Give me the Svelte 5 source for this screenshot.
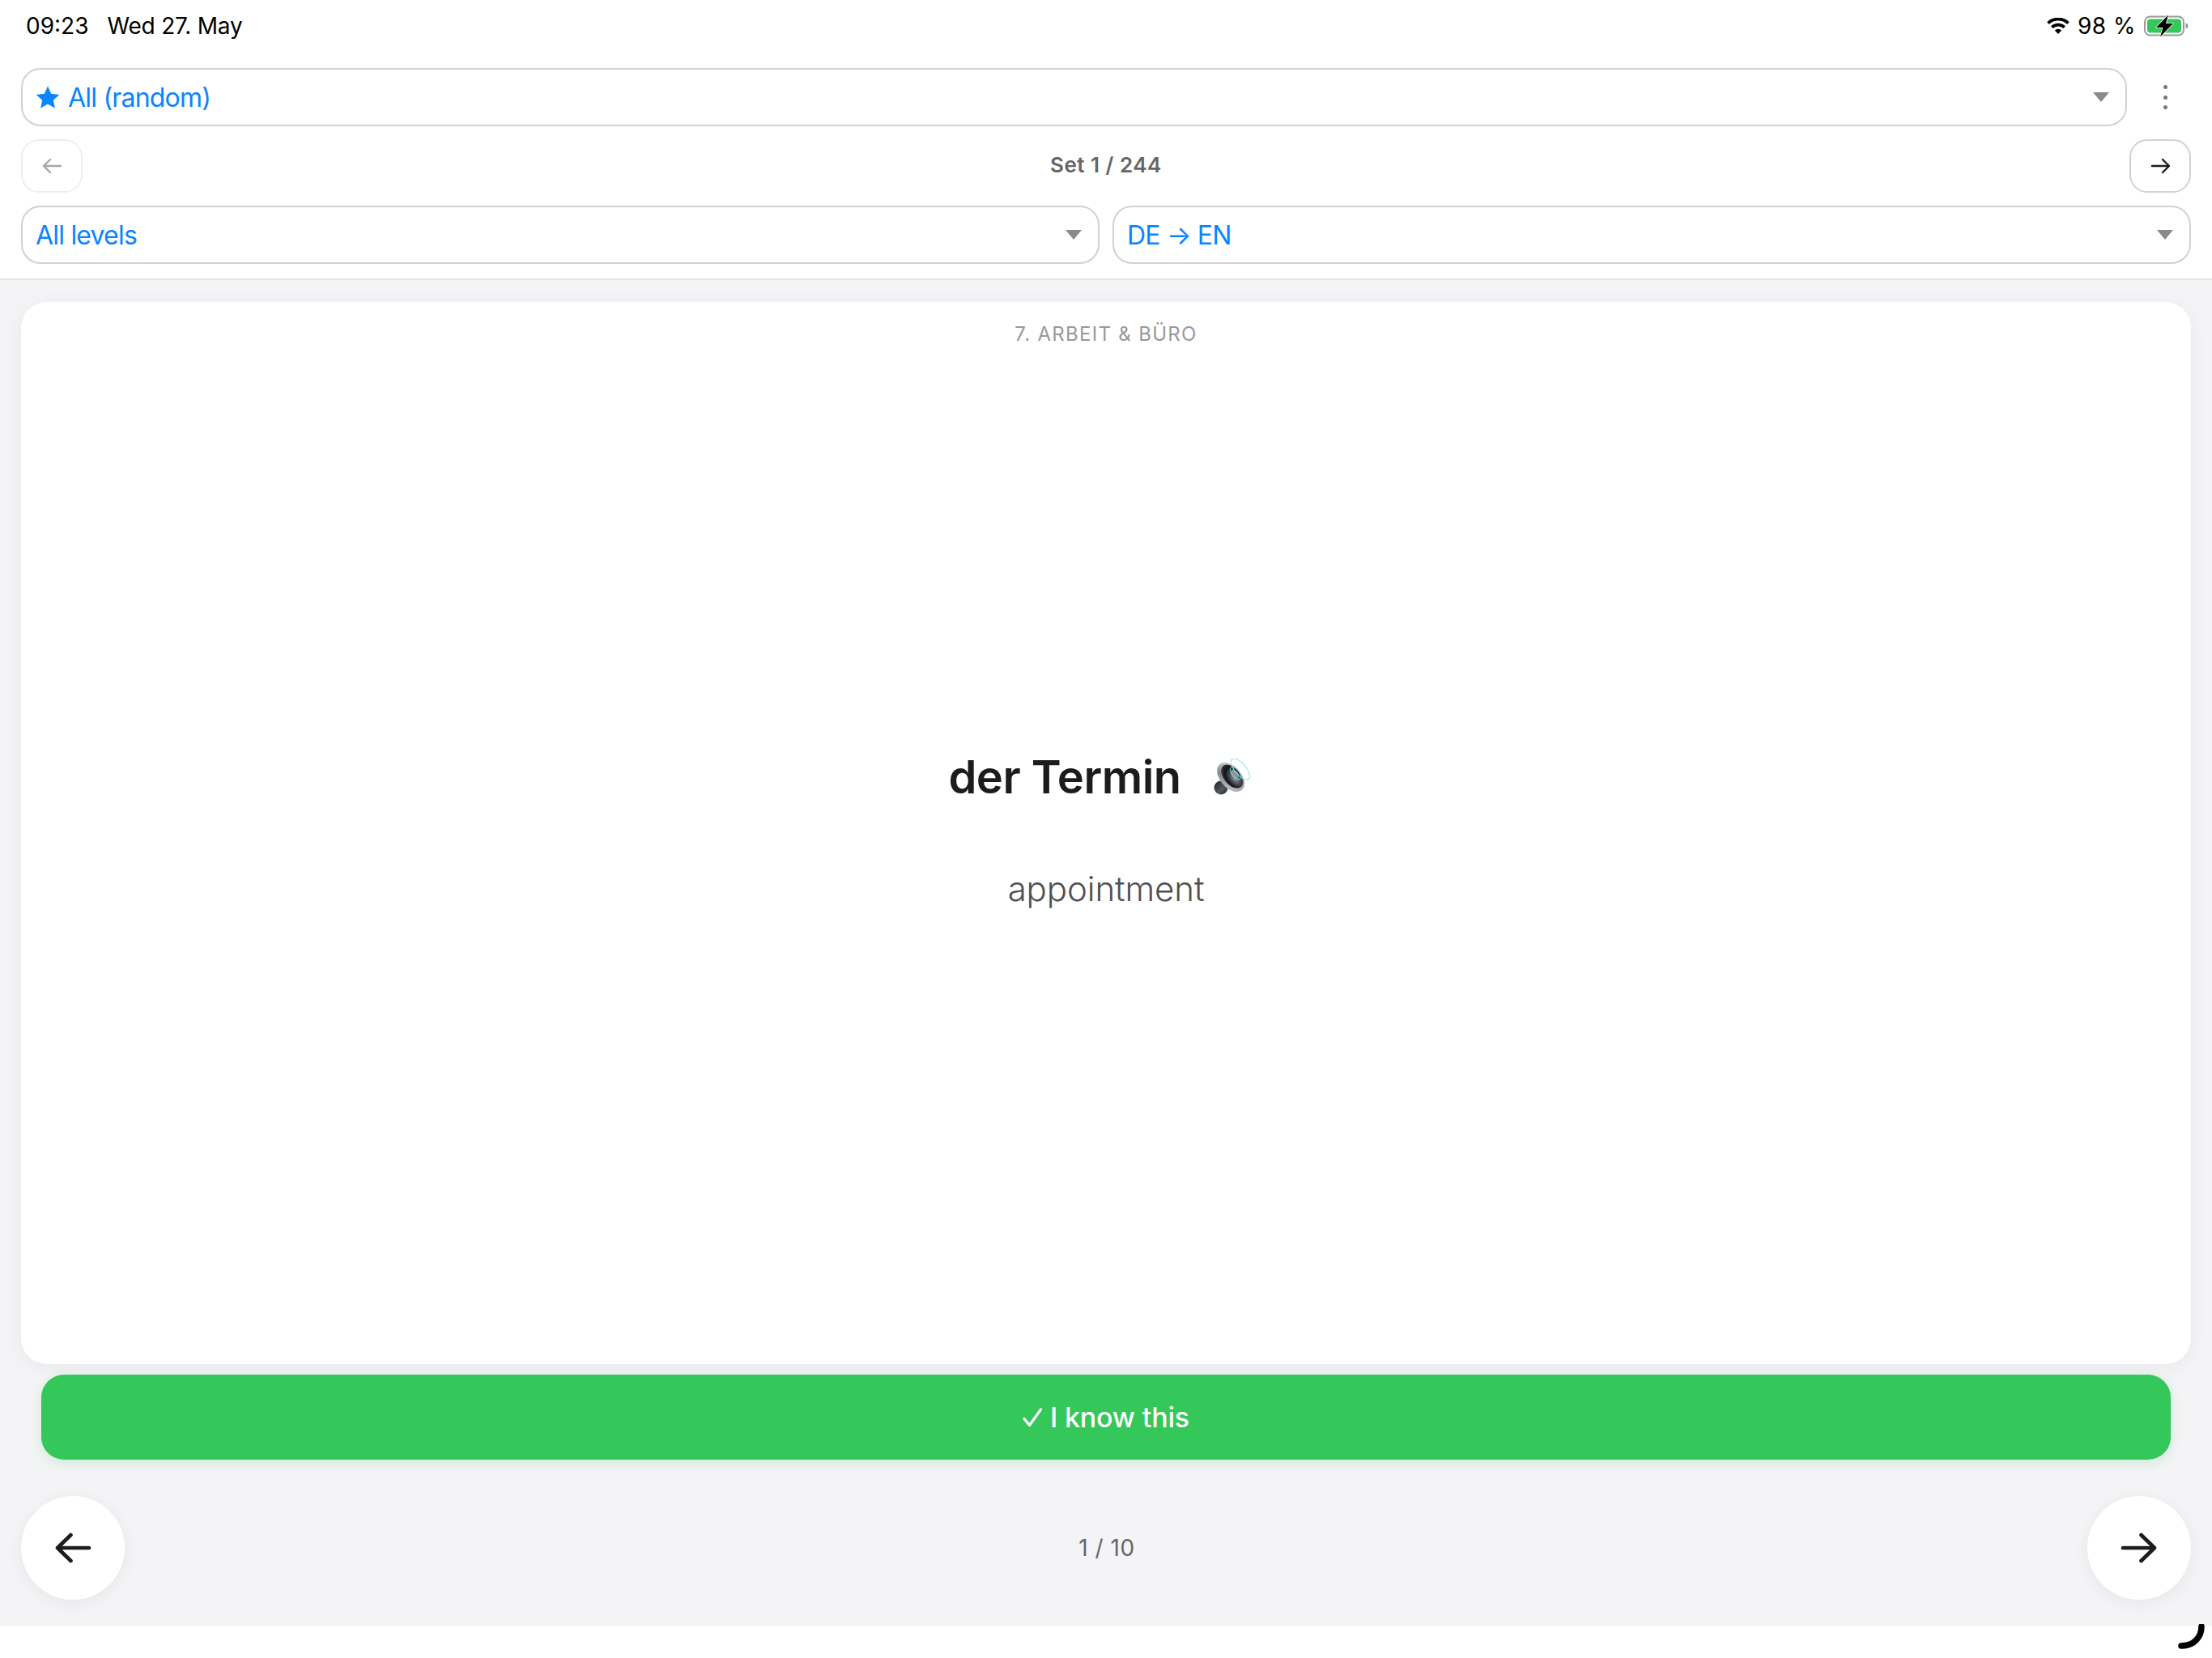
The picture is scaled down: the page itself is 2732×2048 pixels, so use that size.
<script>
  let deck = 'All (random)';
  let level = 'All levels';
  let direction = 'DE → EN';
  let setLabel = 'Set 1 / 244';
  let category = '7. Arbeit & Büro';
  let word = 'der Termin';
  let translation = 'appointment';
  let progress = '1 / 10';
</script>

<div class="page">
  <div class="status-bar">
    <div class="status-left">
      <span>09:23</span>
      <span>Wed 27. May</span>
    </div>
    <div class="status-right">
      <svg class="wifi" viewBox="0 0 28 20" width="28" height="20">
        <path d="M14 20l-4.2-4.6a6.2 6.2 0 0 1 8.4 0z" fill="#000" />
        <path d="M7.6 13.1L5 10.3a13 13 0 0 1 18 0l-2.6 2.8a9.2 9.2 0 0 0-12.8 0z" fill="#000" />
        <path d="M2.9 8L0.2 5.2a20 20 0 0 1 27.6 0L25.1 8a16.2 16.2 0 0 0-22.2 0z" fill="#000" />
      </svg>
      <span class="battery-text">98 %</span>
      <svg class="battery" viewBox="0 0 56 28" width="56" height="28">
        <rect x="1" y="2.5" width="48" height="23" rx="6.5" fill="none" stroke="#9a9a9a" stroke-width="2" />
        <rect x="4" y="5.5" width="42" height="17" rx="4" fill="#34c759" />
        <path d="M51.5 10.5c2 .5 3 2 3 3.5s-1 3-3 3.5z" fill="#9a9a9a" />
        <path d="M30 0.5L15 16h8.5L20 27.5 36 11h-9z" fill="#000" stroke="#fff" stroke-width="1.6" stroke-linejoin="round" paint-order="stroke" />
      </svg>
    </div>
  </div>

  <header>
    <div class="deck-row">
      <div class="select deck">
        <span class="select-value">
          <svg class="star" viewBox="0 0 30 28" width="30" height="28">
            <path d="M15 .6l4.2 9.2 10.1 1.1-7.5 6.8 2.1 9.9L15 22.6l-8.9 5 2.1-9.9L.7 10.9l10.1-1.1z" fill="#0a84ff" />
          </svg>
          {deck}
        </span>
        <span class="caret"></span>
      </div>
      <button class="more" aria-label="More">
        <span></span><span></span><span></span>
      </button>
    </div>

    <div class="set-row">
      <button class="set-btn disabled" aria-label="Previous set">
        <svg viewBox="0 0 24 20" width="24" height="20">
          <path d="M23 10H2M10 2l-8 8 8 8" fill="none" stroke="#a6a6a6" stroke-width="2.4" stroke-linecap="round" stroke-linejoin="round" />
        </svg>
      </button>
      <span class="set-label">{setLabel}</span>
      <button class="set-btn" aria-label="Next set">
        <svg viewBox="0 0 24 20" width="24" height="20">
          <path d="M2 10h21M15 2l8 8-8 8" fill="none" stroke="#1c1c1e" stroke-width="2.4" stroke-linecap="round" stroke-linejoin="round" />
        </svg>
      </button>
    </div>

    <div class="filter-row">
      <div class="select">
        <span class="select-value">{level}</span>
        <span class="caret"></span>
      </div>
      <div class="select">
        <span class="select-value">{direction}</span>
        <span class="caret"></span>
      </div>
    </div>
  </header>

  <main>
    <section class="card">
      <div class="category">{category}</div>
      <div class="card-body">
        <div class="word-row">
          <span class="word">{word}</span>
          <button class="speak" aria-label="Play audio">
            <svg viewBox="0 0 46 46" width="46" height="46">
              <defs>
                <linearGradient id="rim" x1="0" y1="0" x2="1" y2="1">
                  <stop offset="0" stop-color="#dfe1e4" />
                  <stop offset="0.5" stop-color="#83878b" />
                  <stop offset="1" stop-color="#d2d5d8" />
                </linearGradient>
                <radialGradient id="cone" cx="0.62" cy="0.42" r="0.62">
                  <stop offset="0" stop-color="#a2a8ae" />
                  <stop offset="0.35" stop-color="#565a5f" />
                  <stop offset="0.75" stop-color="#121315" />
                  <stop offset="1" stop-color="#33363a" />
                </radialGradient>
                <linearGradient id="magnet" x1="0" y1="0" x2="1" y2="1">
                  <stop offset="0" stop-color="#1f2124" />
                  <stop offset="0.6" stop-color="#55585c" />
                  <stop offset="1" stop-color="#1a1b1d" />
                </linearGradient>
              </defs>
              <circle cx="9" cy="36" r="8.500" fill="url(#magnet)" />
              <ellipse cx="21" cy="23" rx="21" ry="13" transform="rotate(50 21 23)" fill="url(#rim)" />
              <ellipse cx="22.500" cy="22" rx="17" ry="10" transform="rotate(50 22.500 22)" fill="url(#cone)" />
              <ellipse cx="26" cy="19" rx="6" ry="4" transform="rotate(50 26 19)" fill="#8f9499" />
              <ellipse cx="27" cy="18" rx="9" ry="4.500" transform="rotate(50 27 18)" fill="none" stroke="#6fd4e8" stroke-width="1" />
              <ellipse cx="33" cy="13" rx="16" ry="7" transform="rotate(50 33 13)" fill="none" stroke="#8ee0ef" stroke-width="1" />
            </svg>
          </button>
        </div>
        <div class="translation">{translation}</div>
      </div>
    </section>

    <button class="know">
      <svg viewBox="0 0 24 24" width="24" height="24">
        <path d="M2 13.5l6.5 8L22.5 2" fill="none" stroke="#fff" stroke-width="3.200" stroke-linecap="round" stroke-linejoin="round" />
      </svg>
      <span>I know this</span>
    </button>

    <nav class="card-nav">
      <button class="round" aria-label="Previous card">
        <svg viewBox="0 0 46 38" width="46" height="38">
          <path d="M43 19H4M20.500 3L4 19l16.500 16" fill="none" stroke="#1c1c1e" stroke-width="4.600" stroke-linecap="round" stroke-linejoin="round" />
        </svg>
      </button>
      <span class="progress">{progress}</span>
      <button class="round" aria-label="Next card">
        <svg viewBox="0 0 46 38" width="46" height="38">
          <path d="M3 19h39M25.500 3L42 19 25.500 35" fill="none" stroke="#1c1c1e" stroke-width="4.600" stroke-linecap="round" stroke-linejoin="round" />
        </svg>
      </button>
    </nav>
  </main>

  <footer>
    <svg class="corner" viewBox="0 0 34 34" width="34" height="34">
      <path d="M29 3c0 13-9 24-25 24" fill="none" stroke="#000" stroke-width="7.500" stroke-linecap="round" />
    </svg>
  </footer>
</div>

<style>
  :global(body) {
    margin: 0;
    background: #fff;
    font-family: Inter, "Liberation Sans", sans-serif;
  }

  button {
    font-family: inherit;
    padding: 0;
    border: none;
    background: none;
  }

  .page {
    position: relative;
    display: flex;
    flex-direction: column;
    height: 2048px;
    overflow: hidden;
  }

  .status-bar {
    display: flex;
    justify-content: space-between;
    align-items: center;
    height: 64px;
    padding: 0 28px 0 32px;
    font-size: 28px;
    color: #000;
  }

  .status-left {
    display: flex;
    gap: 23px;
  }

  .status-left span:last-child {
    letter-spacing: -0.2px;
  }

  .status-right {
    display: flex;
    align-items: center;
    gap: 10px;
  }

  .battery-text {
    letter-spacing: 0.5px;
  }

  header {
    display: flex;
    flex-direction: column;
    gap: 16px;
    padding: 20px 26px 18px 26px;
    border-bottom: 2px solid #e5e5ea;
  }

  .deck-row {
    display: flex;
    align-items: center;
    gap: 16px;
  }

  .deck-row .select {
    flex: 1;
  }

  .select {
    display: flex;
    justify-content: space-between;
    align-items: center;
    height: 72px;
    box-sizing: border-box;
    padding: 0 20px 0 16px;
    border: 2.5px solid #d1d1d6;
    border-radius: 24px;
    color: #0a84ff;
    font-size: 32px;
    letter-spacing: -0.8px;
    background: #fff;
  }

  .select-value {
    display: flex;
    align-items: center;
    gap: 10px;
  }

  .caret {
    width: 0;
    height: 0;
    border-left: 10px solid transparent;
    border-right: 10px solid transparent;
    border-top: 12px solid #8a8a8a;
  }

  .more {
    display: flex;
    flex-direction: column;
    align-items: center;
    gap: 7.500px;
    width: 63px;
  }

  .more span {
    width: 5px;
    height: 5px;
    border-radius: 50%;
    background: #777;
  }

  .set-row {
    display: flex;
    justify-content: space-between;
    align-items: center;
  }

  .set-btn {
    display: flex;
    align-items: center;
    justify-content: center;
    width: 76px;
    height: 66px;
    box-sizing: border-box;
    border: 2.5px solid #d1d1d6;
    border-radius: 22px;
    background: #fff;
  }

  .set-btn.disabled {
    border-color: #eeeef0;
  }

  .set-label {
    margin-bottom: 3px;
    font-size: 26px;
    font-weight: 600;
    letter-spacing: 0.5px;
    color: #666;
  }

  .filter-row {
    display: grid;
    grid-template-columns: 1fr 1fr;
    gap: 16px;
  }

  main {
    flex: 1;
    display: flex;
    flex-direction: column;
    padding: 27px 26px 32px 26px;
    background: #f4f4f6;
  }

  .card {
    flex: 1;
    display: flex;
    flex-direction: column;
    background: #fff;
    border-radius: 32px;
    box-shadow: 0 4px 24px rgba(0, 0, 0, 0.05);
  }

  .category {
    padding-top: 26px;
    text-align: center;
    font-size: 24px;
    line-height: 28px;
    letter-spacing: 1.3px;
    text-transform: uppercase;
    color: #98989d;
  }

  .card-body {
    flex: 1;
    display: flex;
    flex-direction: column;
    align-items: center;
    justify-content: center;
    padding-bottom: 64px;
  }

  .word-row {
    display: flex;
    align-items: center;
    gap: 24px;
  }

  .word {
    font-size: 56px;
    font-weight: 600;
    letter-spacing: -0.5px;
    line-height: 72px;
    color: #1c1c1e;
  }

  .speak {
    display: flex;
    padding: 0 16px;
  }

  .translation {
    margin-top: 75px;
    font-size: 42px;
    font-weight: 300;
    letter-spacing: -0.1px;
    line-height: 54px;
    color: #505052;
  }

  .know {
    display: flex;
    align-items: center;
    justify-content: center;
    gap: 10px;
    height: 105px;
    margin: 13px 25px 0 25px;
    border-radius: 28px;
    background: #34c759;
    color: #fff;
    font-size: 34px;
    font-weight: 500;
    letter-spacing: -0.2px;
    box-shadow: 0 4px 16px rgba(52, 199, 89, 0.2);
  }

  .card-nav {
    display: flex;
    justify-content: space-between;
    align-items: center;
    margin-top: 45px;
  }

  .round {
    display: flex;
    align-items: center;
    justify-content: center;
    width: 128px;
    height: 128px;
    border-radius: 50%;
    background: #fff;
    box-shadow: 0 4px 20px rgba(0, 0, 0, 0.06);
  }

  .progress {
    margin-left: 2px;
    font-size: 28px;
    letter-spacing: 0.5px;
    color: #666;
  }

  footer {
    height: 40px;
    background: #fff;
  }

  .corner {
    position: absolute;
    right: 8px;
    bottom: 8px;
  }
</style>
